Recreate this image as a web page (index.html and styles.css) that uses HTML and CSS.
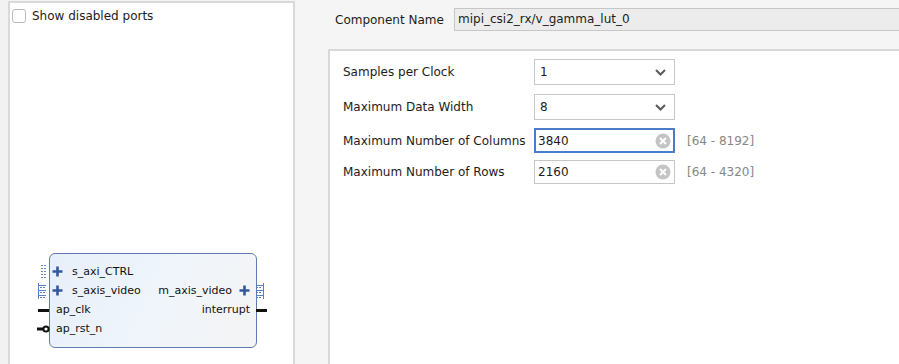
FILE: index.html
```html
<!DOCTYPE html>
<html lang="en">
<head>
  <meta charset="UTF-8"/>
  <title>Customize IP - Gamma LUT</title>
  <link rel="stylesheet" href="styles.css">
</head>
<body>
  <div class="layout">

    <!-- IP SYMBOL PANEL -->
    <div class="symbol-panel">
      <label class="check">
        <span class="check-box"></span>
        <span>Show disabled ports</span>
      </label>

      <div class="block">
        <div class="port-row">
          <div class="port-side">
            <svg class="pin pin-left bus-single" width="10" height="14" viewBox="0 0 10 14">
              <g fill="#6d8cc4">
                <rect x="4" y="0" width="2" height="1"/><rect x="7" y="0" width="2" height="1"/>
                <rect x="4" y="3" width="2" height="1"/><rect x="7" y="3" width="2" height="1"/>
                <rect x="4" y="6" width="2" height="1"/><rect x="7" y="6" width="2" height="1"/>
                <rect x="4" y="9" width="2" height="1"/><rect x="7" y="9" width="2" height="1"/>
                <rect x="4" y="12" width="2" height="1"/><rect x="7" y="12" width="2" height="1"/>
              </g>
            </svg>
            <svg class="plus" width="11" height="11" viewBox="0 0 11 11"><path d="M5.5 0.5v10M0.5 5.5h10" stroke="#34589a" stroke-width="2.6"/></svg>
            <span>s_axi_CTRL</span>
          </div>
        </div>

        <div class="port-row">
          <div class="port-side">
            <svg class="pin pin-left bus-multi" width="10" height="16" viewBox="0 0 10 16">
              <g fill="#5b7fc0">
                <rect x="1" y="0" width="1" height="16"/>
                <rect x="2" y="2" width="7" height="1"/>
                <rect x="2" y="7" width="7" height="1"/>
                <rect x="2" y="12" width="7" height="1"/>
                <rect x="3" y="4" width="2" height="1"/><rect x="6" y="4" width="2" height="1"/>
                <rect x="3" y="9" width="2" height="1"/><rect x="6" y="9" width="2" height="1"/>
                <rect x="3" y="14" width="2" height="1"/><rect x="6" y="14" width="2" height="1"/>
              </g>
            </svg>
            <svg class="plus" width="11" height="11" viewBox="0 0 11 11"><path d="M5.5 0.5v10M0.5 5.5h10" stroke="#34589a" stroke-width="2.6"/></svg>
            <span>s_axis_video</span>
          </div>
          <div class="port-side out">
            <span>m_axis_video</span>
            <svg class="plus" width="11" height="11" viewBox="0 0 11 11"><path d="M5.5 0.5v10M0.5 5.5h10" stroke="#34589a" stroke-width="2.6"/></svg>
            <svg class="pin pin-right bus-multi" width="10" height="16" viewBox="0 0 10 16">
              <g fill="#5b7fc0">
                <rect x="8" y="0" width="1" height="16"/>
                <rect x="1" y="2" width="7" height="1"/>
                <rect x="1" y="7" width="7" height="1"/>
                <rect x="1" y="12" width="7" height="1"/>
                <rect x="1" y="4" width="2" height="1"/><rect x="4" y="4" width="2" height="1"/>
                <rect x="1" y="9" width="2" height="1"/><rect x="4" y="9" width="2" height="1"/>
                <rect x="1" y="14" width="2" height="1"/><rect x="4" y="14" width="2" height="1"/>
              </g>
            </svg>
          </div>
        </div>

        <div class="port-row">
          <div class="port-side plain">
            <span class="wire wire-left"></span>
            <span>ap_clk</span>
          </div>
          <div class="port-side out plain">
            <span>interrupt</span>
            <span class="wire wire-right"></span>
          </div>
        </div>

        <div class="port-row">
          <div class="port-side plain">
            <svg class="pin pin-left" width="13" height="9" viewBox="0 0 13 9">
              <path d="M0 4.5h6" stroke="#111" stroke-width="3"/>
              <circle cx="9" cy="4.5" r="2.6" fill="#fff" stroke="#111" stroke-width="2"/>
            </svg>
            <span>ap_rst_n</span>
          </div>
        </div>
      </div>
    </div>

    <!-- CONFIGURATION PANEL -->
    <div class="config-panel">
      <div class="name-row">
        <span class="name-label">Component Name</span>
        <div class="name-field">mipi_csi2_rx/v_gamma_lut_0</div>
      </div>

      <div class="params">
        <div class="param">
          <span class="param-label">Samples per Clock</span>
          <div class="control select">
            <span>1</span>
            <svg width="11" height="7" viewBox="0 0 11 7"><path d="M1 1l4.5 4.5L10 1" fill="none" stroke="#5a5a5a" stroke-width="2"/></svg>
          </div>
        </div>

        <div class="param">
          <span class="param-label">Maximum Data Width</span>
          <div class="control select">
            <span>8</span>
            <svg width="11" height="7" viewBox="0 0 11 7"><path d="M1 1l4.5 4.5L10 1" fill="none" stroke="#5a5a5a" stroke-width="2"/></svg>
          </div>
        </div>

        <div class="param">
          <span class="param-label">Maximum Number of Columns</span>
          <div class="control text focused">
            <span>3840</span>
            <svg width="16" height="16" viewBox="0 0 16 16"><circle cx="8" cy="8" r="7.5" fill="#c4c4c4"/><path d="M5 5l6 6M11 5l-6 6" stroke="#fff" stroke-width="2"/></svg>
          </div>
          <span class="range">[64 - 8192]</span>
        </div>

        <div class="param">
          <span class="param-label">Maximum Number of Rows</span>
          <div class="control text">
            <span>2160</span>
            <svg width="16" height="16" viewBox="0 0 16 16"><circle cx="8" cy="8" r="7.5" fill="#c4c4c4"/><path d="M5 5l6 6M11 5l-6 6" stroke="#fff" stroke-width="2"/></svg>
          </div>
          <span class="range">[64 - 4320]</span>
        </div>
      </div>
    </div>

  </div>
</body>
</html>
```

FILE: styles.css
```css
/* GLOBAL */
* {
  margin: 0;
  padding: 0;
  box-sizing: border-box;
}
body {
  font-family: "DejaVu Sans", sans-serif;
  font-size: 12px;
  color: #1c1c1c;
  background: #f2f2f2;
  overflow: hidden;
}
.layout {
  display: flex;
  height: 364px;
}

/* SYMBOL PANEL */
.symbol-panel {
  width: 287px;
  margin-left: 8px;
  margin-top: 1px;
  border: 2px solid #dadada;
  border-bottom: none;
  background: #fff;
}
.check {
  display: flex;
  align-items: center;
  gap: 6px;
  height: 26px;
  padding: 0 0 0 2px;
  line-height: 14px;
}
.check-box {
  width: 14px;
  height: 14px;
  border: 1px solid #b9b9b9;
  border-radius: 3px;
  background: #fff;
}
.block {
  width: 208px;
  height: 95px;
  margin: 224px 0 0 39px;
  padding-top: 8px;
  border: 1px solid #5f7bb0;
  border-radius: 6px;
  background: linear-gradient(115deg, #e7eff9 0%, #f0f5fb 55%, #f4f4f4 100%);
  font-size: 11px;
  color: #111;
}
.port-row {
  position: relative;
  display: flex;
  justify-content: space-between;
  align-items: center;
  height: 19px;
}
.port-side {
  display: flex;
  align-items: center;
  gap: 9px;
  padding-left: 2px;
}
.port-side.plain {
  padding-left: 6px;
}
.port-side.out {
  padding: 0 6px 0 0;
  gap: 7px;
}
.plus {
  display: block;
}
.pin {
  position: absolute;
  display: block;
}
.pin-left {
  left: -13px;
  top: 50%;
  transform: translateY(-50%);
}
.pin-right {
  right: -9px;
  top: 50%;
  transform: translateY(-50%);
}
.wire {
  position: absolute;
  top: 50%;
  width: 11px;
  height: 3px;
  margin-top: -1px;
  background: #111;
}
.wire-left {
  left: -12px;
}
.wire-right {
  right: -11px;
}

/* CONFIGURATION PANEL */
.config-panel {
  flex: 1;
  display: flex;
  flex-direction: column;
  background: #f5f5f5;
  min-width: 0;
}
.name-row {
  display: flex;
  align-items: center;
  margin-top: 8px;
  padding-left: 40px;
  margin-right: -10px;
}
.name-label {
  width: 119px;
}
.name-field {
  flex: 1;
  height: 23px;
  line-height: 21px;
  padding-left: 3px;
  border: 1px solid #c6c6c6;
  background: #ececec;
}
.params {
  flex: 1;
  margin: 18px -10px 0 33px;
  border-top: 2px solid #d8d8d8;
  border-left: 2px solid #d8d8d8;
  background: #fff;
  padding: 8px 0 0 13px;
}
.param {
  display: flex;
  align-items: center;
  margin-bottom: 9px;
}
.param:nth-child(2) {
  margin-bottom: 8px;
}
.param:nth-child(3) {
  margin-bottom: 7px;
}
.param-label {
  width: 191px;
}
.control {
  display: flex;
  align-items: center;
  justify-content: space-between;
  width: 141px;
  height: 26px;
  border: 1px solid #c6c6c6;
  background: #fff;
  padding: 0 8px 0 5px;
}
.control.text {
  height: 24px;
  padding: 0 3px 0 3px;
}
.control.focused {
  border: 2px solid #4a7cc9;
  padding: 0 2px 0 2px;
  height: 25px;
}
.control svg {
  display: block;
}
.range {
  margin-left: 12px;
  color: #878787;
}
```
